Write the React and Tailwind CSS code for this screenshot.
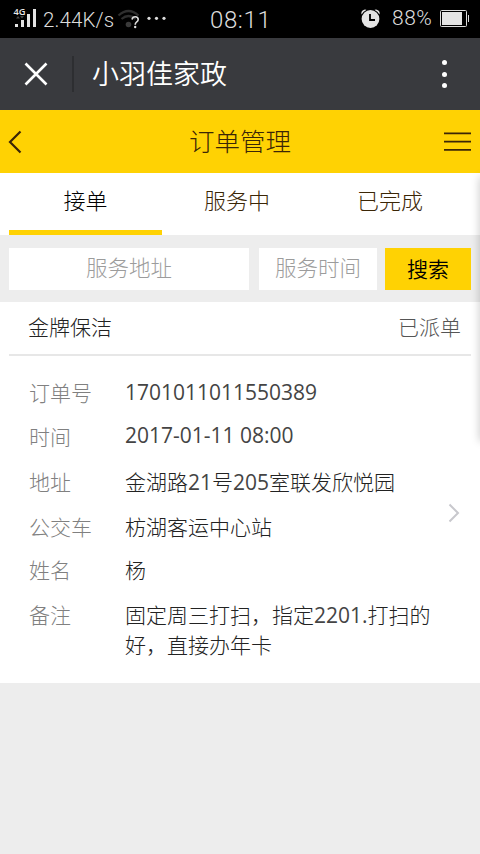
import React from "react";

const tabs = [
  { name: "接单", active: true },
  { name: "服务中", active: false },
  { name: "已完成", active: false },
];

const order = [
  { label: "订单号", value: "1701011011550389", row: "h-[44px]", shift: "-mt-px" },
  { label: "时间", value: "2017-01-11 08:00", row: "h-[45px]", shift: "-mt-[2px]" },
  { label: "地址", value: "金湖路21号205室联发欣悦园", row: "h-[45px]", shift: "" },
  { label: "公交车", value: "枋湖客运中心站", row: "h-[43px]", shift: "" },
  { label: "姓名", value: "杨", row: "h-[45px]", shift: "" },
  { label: "备注", value: "固定周三打扫，指定2201.打扫的好，直接办年卡", row: "h-[60px]", shift: "" },
];

// digits are set one weight heavier than the Chinese text
const Value = ({ text }) => {
  return text.split(/([\d.:\- ]+)/).map((part, i) =>
    i % 2 ? (
      <span key={i} className="font-normal text-[#444]">
        {part}
      </span>
    ) : (
      part
    )
  );
};

const StatusBar = () => {
  return (
    <div className="flex h-[38px] items-center bg-black text-[#dcdcdc]">
      <svg className="ml-[12px] h-[38px] w-[26px]" viewBox="12 0 26 38">
        <text x="13.5" y="15" fontSize="9" fontWeight="600" fill="#e8e8e8" textLength="12" lengthAdjust="spacingAndGlyphs">
          4G
        </text>
        <path d="M16 18.5l2-2.5 2 2.5zM20 16l2 2.5 2-2.5z" fill="#444" />
        <path d="M15 24h3v3h-3zM21 20h3v7h-3zM27 14h3v13h-3zM33 9h3v18h-3z" fill="#e4e4e4" />
      </svg>
      <span className="mt-0.5 ml-[5px] w-[73px] whitespace-nowrap font-['Roboto','Noto_Sans_CJK_SC',sans-serif] text-[20.5px] font-[350] tracking-[0.1px]">
        2.44K/s
      </span>
      <svg className="h-[38px] w-[52px]" viewBox="116 0 52 38">
        <g fill="none" stroke="#2e2e2e" strokeWidth="2.2">
          <path d="M118.500 15.500q10-9 20 0M121.500 19q7-6 14 0" />
        </g>
        <circle cx="128.500" cy="24.500" r="2.800" fill="#3a3a3a" />
        <path d="M132 19.500q.5-2.700 3.200-2.700 3 0 3 2.700 0 1.500-1.700 2.700-1.300 1-1.300 2.600" fill="none" stroke="#ddd" strokeWidth="1.600" />
        <circle cx="135.200" cy="27" r="1.200" fill="#ddd" />
        <g fill="#ddd">
          <circle cx="149" cy="18.300" r="1.600" />
          <circle cx="156.500" cy="18.300" r="1.600" />
          <circle cx="164" cy="18.300" r="1.600" />
        </g>
      </svg>
      <span className="mt-0.5 ml-[42px] w-[149px] font-['Roboto','Noto_Sans_CJK_SC',sans-serif] text-[24px] font-[350] tracking-[0.6px]">
        08:11
      </span>
      <svg className="h-[38px] w-[24px]" viewBox="359 0 24 38">
        <path d="M361.500 14.500q-.8-3.500 2-4.600 2-.8 3.800.6zM379.500 14.500q.8-3.500-2-4.600-2-.8-3.800.6z" fill="#e4e4e4" />
        <circle cx="370.500" cy="19" r="10" fill="#000" />
        <circle cx="370.500" cy="19" r="8.900" fill="#e4e4e4" />
        <path d="M370 14v6h5" fill="none" stroke="#000" strokeWidth="1.800" />
      </svg>
      <span className="ml-[9px] w-[48px] font-['Roboto','Noto_Sans_CJK_SC',sans-serif] text-[21px] font-[350] tracking-[0.5px]">
        88%
      </span>
      <svg className="h-[38px] w-[30px]" viewBox="440 0 30 38">
        <rect x="440.500" y="10.500" width="26" height="16" rx="1" fill="none" stroke="#ddd" />
        <path d="M442 12h20v13h-20z" fill="#e4e4e4" />
        <path d="M468.500 15v7" stroke="#ddd" />
      </svg>
    </div>
  );
};

const TitleBar = () => {
  return (
    <div className="flex h-[72px] items-center bg-[#393a3e] text-white">
      <svg className="ml-[24px] size-[24px]" viewBox="0 0 24 24" fill="none" stroke="currentColor" strokeWidth="2.600">
        <path d="M1.500 1.500l21 21M22.500 1.500l-21 21" />
      </svg>
      <div className="ml-[24px] h-[36px] w-[2px] bg-[#2d2e31]" />
      <h1 className="ml-[18px] flex-1 text-[27px] font-[350]">小羽佳家政</h1>
      <div className="mr-[33.500px] flex flex-col gap-[6.500px]">
        <span className="size-[5px] rounded-full bg-white" />
        <span className="size-[5px] rounded-full bg-white" />
        <span className="size-[5px] rounded-full bg-white" />
      </div>
    </div>
  );
};

const PageHeader = () => {
  return (
    <div className="flex h-[63px] items-center justify-between bg-[#ffd203] text-[#3b2606]">
      <svg className="ml-[8px] h-[24px] w-[28px]" viewBox="0 0 28 24" fill="none" stroke="currentColor" strokeWidth="2.200">
        <path d="M12.500 1.500L2 12l10.500 10.500" />
      </svg>
      <h2 className="text-[25.500px] font-light">订单管理</h2>
      <svg className="mr-[9px] h-[20px] w-[27px]" viewBox="0 0 27 20" stroke="currentColor" strokeWidth="1.700">
        <path d="M0 1.300h27M0 9.600h27M0 17.900h27" />
      </svg>
    </div>
  );
};

const App = () => {
  return (
    <div className="h-[854px] w-[480px] overflow-hidden bg-[#ededed] font-['Open_Sans','Noto_Sans_CJK_SC',sans-serif]">
      <StatusBar />
      <TitleBar />
      <PageHeader />
      <div className="relative">
        <div className="flex h-[62px] bg-white px-[9px]">
          {tabs.map((tab) => (
            <div
              key={tab.name}
              className={
                tab.active
                  ? "flex h-[62px] w-[153px] items-center justify-center border-b-[5px] border-[#ffd203] pb-[2px] text-[22px] font-light text-black"
                  : "flex h-[62px] w-[153px] items-center justify-center border-b-[5px] border-transparent pr-[3px] pb-[2px] text-[22px] font-light text-[#3b2606]"
              }>
              {tab.name}
            </div>
          ))}
        </div>
        <div className="flex h-[67px] px-[9px] pt-[13px] text-[21.500px] font-light">
          <input
            type="text"
            className="h-[42px] w-[240px] bg-white pb-1 text-center placeholder-[#9c9c9c]"
            placeholder="服务地址"
          />
          <input
            type="text"
            className="ml-[10px] h-[42px] w-[118px] bg-white pb-1 text-center placeholder-[#9c9c9c]"
            placeholder="服务时间"
          />
          <button className="ml-[8px] h-[42px] w-[86px] bg-[#ffd203] pt-0.5 text-[21px] font-[350] text-black">搜索</button>
        </div>
        <div className="h-[381px] bg-white px-[9px] font-light">
          <div className="flex h-[54px] items-center justify-between border-b-2 border-[#e7e7e7] pr-[10px] pl-[19px] text-[21px]">
            <span className="text-[#222]">金牌保洁</span>
            <span className="text-[#555]">已派单</span>
          </div>
          <div className="flex items-center pt-[22px] pl-[20px]">
            <div className="w-[419px] text-[21px] leading-[30px]">
              {order.map((item) => (
                <div key={item.label} className={`flex ${item.row}`}>
                  <span className="w-[96px] text-[#808080]">{item.label}</span>
                  <span className={`w-[312px] text-[#222] ${item.shift}`}>
                    <Value text={item.value} />
                  </span>
                </div>
              ))}
            </div>
            <svg className="-mt-[12px] h-[20px] w-[12px]" viewBox="0 0 12 20" fill="none" stroke="#c8c8cd" strokeWidth="2">
              <path d="M1.500 1.500L10 10l-8.500 8.500" />
            </svg>
          </div>
        </div>
        {/* edge of the side menu */}
        <div className="absolute top-[4px] -right-[6px] h-[264px] w-[6px] shadow-[0_0_8px_rgba(0,0,0,0.25)]" />
      </div>
    </div>
  );
};

export default App;
